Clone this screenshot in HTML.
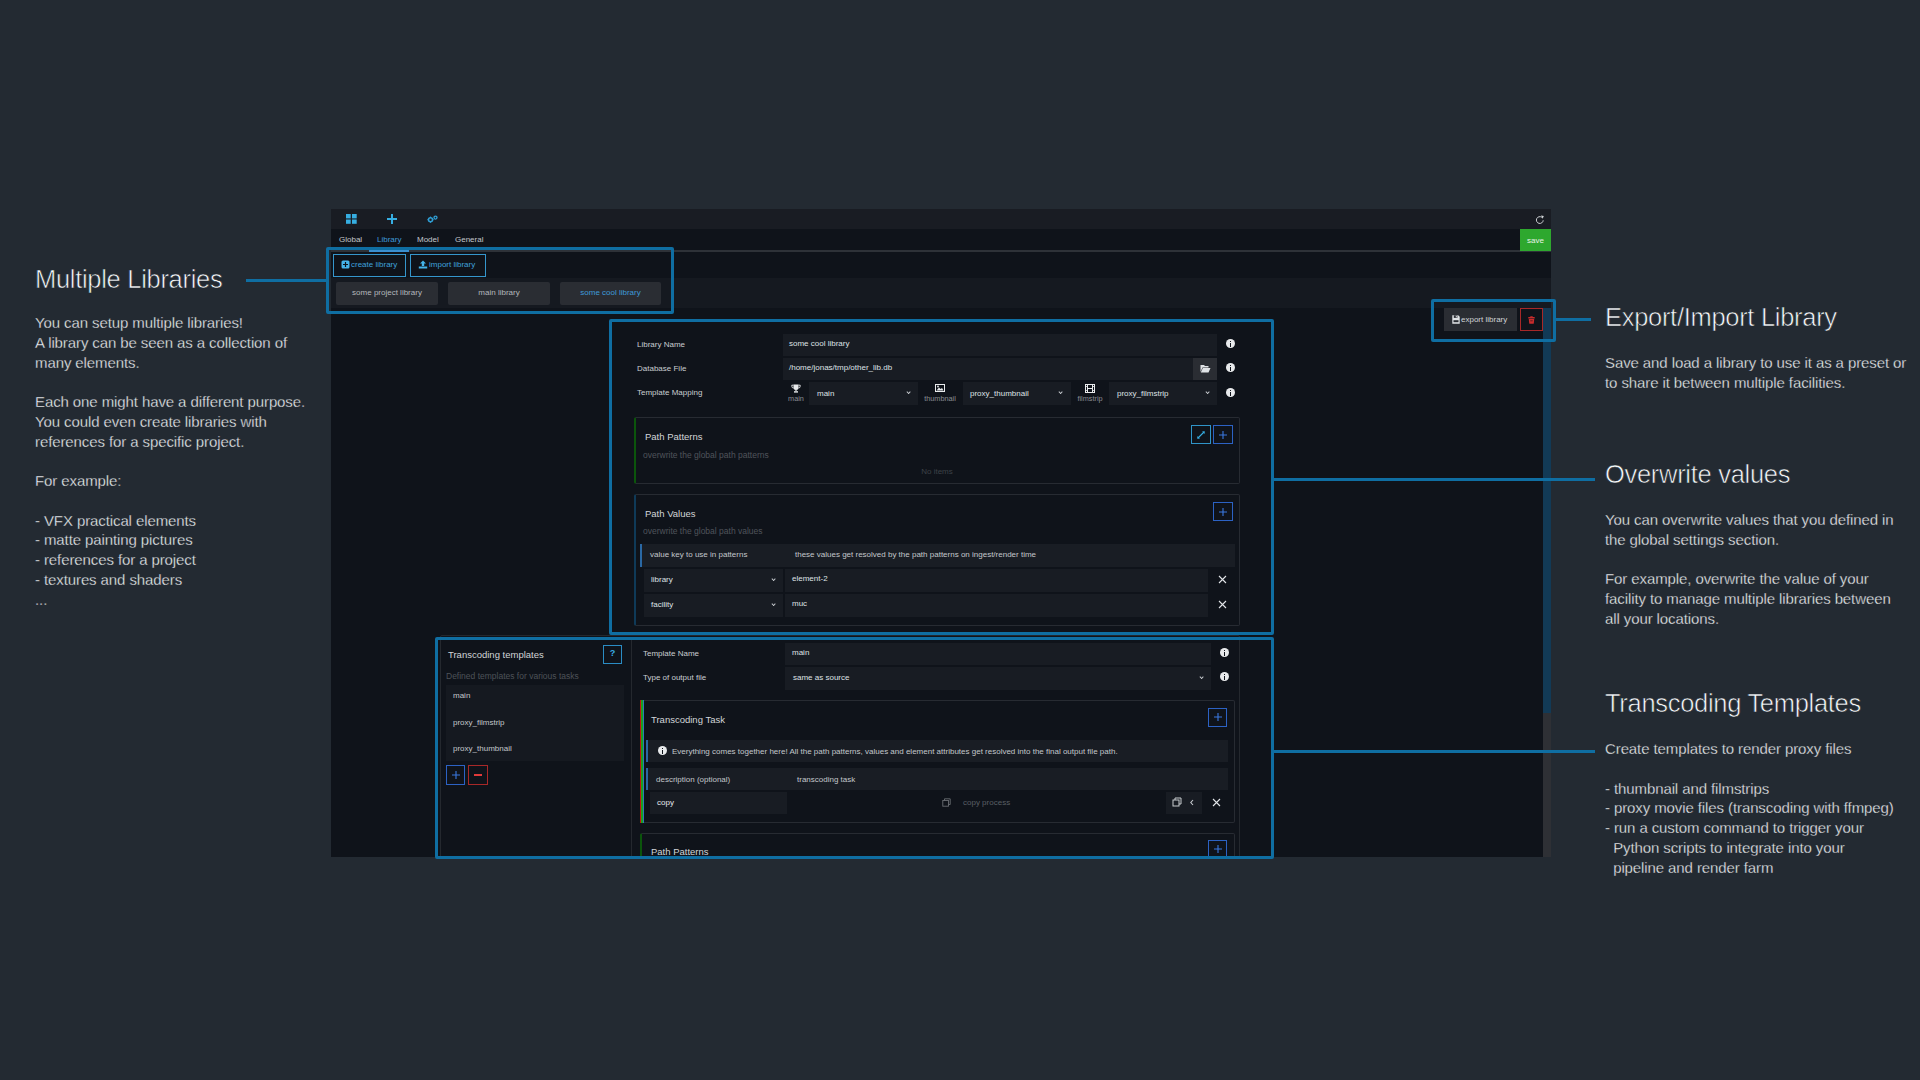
<!DOCTYPE html>
<html><head><meta charset="utf-8">
<style>
*{box-sizing:border-box;margin:0;padding:0}
html,body{width:1920px;height:1080px;overflow:hidden;background:#232a32;font-family:"Liberation Sans",sans-serif}
.a{position:absolute}
.t{position:absolute;white-space:pre;line-height:1}
.ann{color:#f2f4f6}
.h{font-size:25.5px;color:#f6f8fa;letter-spacing:-0.3px;-webkit-text-stroke:0.6px #232a32}
.p{font-size:15px;line-height:19.75px;color:#f2f4f6;letter-spacing:-0.1px;-webkit-text-stroke:0.3px #232a32}
.line{position:absolute;background:#0f6ea2;height:3px}
.box{position:absolute;border:3px solid #0f6ea2;border-radius:2px}
#app{position:absolute;left:331px;top:209px;width:1220px;height:648px;background:#0f131a;overflow:hidden}
.s{font-size:8px;color:#c9cdd1}
.g{color:#50555c}
.inp{position:absolute;background:#181c23}
.btnb{position:absolute;border:1px solid #2c62c4}
.info{position:absolute;width:9px;height:9px;border-radius:50%;background:#e8eaec}
.info:after{content:"";position:absolute;left:4px;top:3.5px;width:1.4px;height:4px;background:#0f131a}
.info:before{content:"";position:absolute;left:4px;top:1.5px;width:1.4px;height:1.3px;background:#0f131a}
.panel{position:absolute;border:1px solid #272b32;border-radius:2px}
.chev{position:absolute;width:3.2px;height:3.2px;border-right:1px solid #c9cdd1;border-bottom:1px solid #c9cdd1;transform:translate(1px,0.5px) rotate(45deg)}
.x{position:absolute;width:10px;height:10px}
.x:before,.x:after{content:"";position:absolute;left:4.4px;top:-1px;width:1.3px;height:12px;background:#e0e3e6;transform:rotate(45deg)}
.x:after{transform:rotate(-45deg)}
</style></head><body>

<!-- left annotation -->
<div class="t h" style="left:35px;top:267px">Multiple Libraries</div>
<div class="line" style="left:246px;top:279px;width:82px"></div>
<div class="t p ann" style="left:35px;top:313px">You can setup multiple libraries!
A library can be seen as a collection of
many elements.

Each one might have a different purpose.
You could even create libraries with
references for a specific project.

For example:

- VFX practical elements
- matte painting pictures
- references for a project
- textures and shaders
...</div>

<!-- right annotations -->
<div class="t h" style="left:1605px;top:305px">Export/Import Library</div>
<div class="t p ann" style="left:1605px;top:353px">Save and load a library to use it as a preset or
to share it between multiple facilities.</div>

<div class="t h" style="left:1605px;top:462px">Overwrite values</div>
<div class="t p ann" style="left:1605px;top:510px">You can overwrite values that you defined in
the global settings section.

For example, overwrite the value of your
facility to manage multiple libraries between
all your locations.</div>

<div class="t h" style="left:1605px;top:691px">Transcoding Templates</div>
<div class="t p ann" style="left:1605px;top:739px">Create templates to render proxy files

- thumbnail and filmstrips
- proxy movie files (transcoding with ffmpeg)
- run a custom command to trigger your
  Python scripts to integrate into your
  pipeline and render farm</div>

<!-- APP -->
<div id="app"><div class="a" style="left:-331px;top:-209px;width:1920px;height:1080px">
  <!-- top icon bar -->
  <div class="a" style="left:331px;top:209px;width:1220px;height:20px;background:#191c23"></div>
  <svg class="a" style="left:345px;top:213px" width="13" height="12" viewBox="0 0 13 12"><g fill="#36aee2"><rect x="1" y="1" width="4.7" height="4.4"/><rect x="7" y="1" width="4.7" height="4.4"/><rect x="1" y="6.5" width="4.7" height="4.3"/><rect x="7" y="6.5" width="4.7" height="4.3"/></g></svg>
  <svg class="a" style="left:386px;top:213px" width="12" height="12" viewBox="0 0 12 12"><g fill="#36aee2"><rect x="5" y="1" width="2" height="10"/><rect x="1" y="5" width="10" height="2"/></g></svg>
  <svg class="a" style="left:426px;top:214px" width="13" height="11" viewBox="0 0 13 11"><g fill="none" stroke="#2f9fd6"><circle cx="4.5" cy="5.7" r="2" stroke-width="1.5"/><circle cx="9.5" cy="3.6" r="1.5" stroke-width="1.3"/></g><g stroke="#2f9fd6" stroke-width="1"><path d="M4.5 2.6v1M4.5 7.8v1M1.4 5.7h1M6.6 5.7h1"/></g></svg>
  <svg class="a" style="left:1535px;top:215px" width="10" height="10" viewBox="0 0 10 10"><path d="M8.2 5.3A3.4 3.4 0 1 1 6.8 2.3" fill="none" stroke="#d4d7da" stroke-width="0.95"/><path d="M6 0.6L8.8 1L7.6 3.8z" fill="#d4d7da"/></svg>

  <!-- tab bar -->
  <div class="t s" style="left:339px;top:236px;color:#c3c7cb">Global</div>
  <div class="t s" style="left:377px;top:236px;color:#3f9ad8">Library</div>
  <div class="t s" style="left:417px;top:236px;color:#c3c7cb">Model</div>
  <div class="t s" style="left:455px;top:236px;color:#c3c7cb">General</div>
  <div class="a" style="left:331px;top:250px;width:1220px;height:2px;background:#2e3238"></div>
  <div class="a" style="left:369px;top:250px;width:40px;height:2px;background:#3a8fd0"></div>
  <div class="a" style="left:1520px;top:229px;width:31px;height:22px;background:#2ea82e"></div>
  <div class="t s" style="left:1527px;top:237px;color:#e8f2e8">save</div>

  <!-- create/import -->
  <div class="a" style="left:333px;top:254px;width:73px;height:23px;border:1px solid #3596cc"></div>
  <svg class="a" style="left:341px;top:260px" width="9" height="9" viewBox="0 0 9 9"><rect x="0.5" y="0.5" width="8" height="8" rx="1.5" fill="#45b4ea"/><path d="M4.5 2v5M2 4.5h5" stroke="#0f131a" stroke-width="1.2"/></svg>
  <div class="t s" style="left:351px;top:261px;color:#3fa2dc">create library</div>
  <div class="a" style="left:410px;top:254px;width:76px;height:23px;border:1px solid #3596cc"></div>
  <svg class="a" style="left:418px;top:260px" width="10" height="9" viewBox="0 0 10 9"><path d="M5 0.5L8 3.5H6.2V6H3.8V3.5H2z" fill="#45b4ea"/><rect x="0.8" y="6.5" width="8.4" height="2" fill="#45b4ea"/></svg>
  <div class="t s" style="left:429px;top:261px;color:#3fa2dc">import library</div>

  <!-- library tabs row -->
  <div class="a" style="left:331px;top:278px;width:1220px;height:30px;background:#151920"></div>
  <div class="a" style="left:336px;top:282px;width:102px;height:23px;background:#2a2d33;border-radius:2px"></div>
  <div class="a" style="left:448px;top:282px;width:102px;height:23px;background:#2a2d33;border-radius:2px"></div>
  <div class="a" style="left:560px;top:282px;width:101px;height:23px;background:#2a2d33;border-radius:2px"></div>
  <div class="t s" style="left:336px;width:102px;text-align:center;top:289px;color:#b4b8bc">some project library</div>
  <div class="t s" style="left:448px;width:102px;text-align:center;top:289px;color:#b4b8bc">main library</div>
  <div class="t s" style="left:560px;width:101px;text-align:center;top:289px;color:#3f9ad8">some cool library</div>

  <!-- scrollbar -->
  <div class="a" style="left:1543px;top:308px;width:8px;height:405px;background:#123a56"></div>
  <div class="a" style="left:1543px;top:713px;width:8px;height:144px;background:#2e3035"></div>

  <!-- export / delete -->
  <div class="a" style="left:1444px;top:308px;width:73px;height:23px;background:#2a2d33"></div>
  <svg class="a" style="left:1452px;top:315px" width="8" height="9" viewBox="0 0 8 9"><path d="M0.3 0.3H6.2L7.7 1.8V8.7H0.3z" fill="#dfe2e5"/><rect x="1.8" y="0.3" width="3.6" height="2.6" fill="#2a2d33"/><rect x="3.8" y="0.8" width="1" height="1.6" fill="#dfe2e5"/><rect x="1.5" y="5.2" width="5" height="2" fill="#2a2d33"/></svg>
  <div class="t s" style="left:1461px;top:316px;color:#d0d3d6">export library</div>
  <div class="a" style="left:1520px;top:308px;width:23px;height:23px;border:1px solid #a82828"></div>
  <svg class="a" style="left:1528px;top:316px" width="7" height="8" viewBox="0 0 7 8"><path d="M2.3 0.3h2.4v0.8h2v1.3H0.3V1.1h2z" fill="#c82c2c"/><path d="M0.8 2.9h5.4l-0.4 4.3q-0.1 0.6-0.7 0.6H1.9q-0.6 0-0.7-0.6z" fill="#c82c2c"/><path d="M2.3 4.8h2.4" stroke="#0f131a" stroke-width=".6"/></svg>

  <!-- library form -->
  <div class="t s" style="left:637px;top:341px">Library Name</div>
  <div class="t s" style="left:637px;top:365px">Database File</div>
  <div class="t s" style="left:637px;top:389px">Template Mapping</div>
  <div class="inp" style="left:783px;top:334px;width:434px;height:22px"></div>
  <div class="t s" style="left:789px;top:340px;color:#dfe2e5">some cool library</div>
  <div class="inp" style="left:783px;top:358px;width:434px;height:22px"></div>
  <div class="a" style="left:1193px;top:358px;width:24px;height:22px;background:#2a2d33"></div>
  <svg class="a" style="left:1200px;top:364px" width="11" height="9" viewBox="0 0 11 9"><path d="M0.5 1H4L5 2H8.5V3.5H2.5L0.5 8z" fill="#e0e3e6"/><path d="M2.8 4H10.5L8.5 8.5H0.8z" fill="#e0e3e6"/></svg>
  <div class="t s" style="left:789px;top:364px;color:#dfe2e5">/home/jonas/tmp/other_lib.db</div>
  <div class="info" style="left:1226px;top:339px"></div>
  <div class="info" style="left:1226px;top:363px"></div>
  <div class="info" style="left:1226px;top:388px"></div>

  <svg class="a" style="left:791px;top:384px" width="10" height="9" viewBox="0 0 10 9"><path d="M2.5 0.5H7.5V3.5A2.5 2.5 0 0 1 2.5 3.5z" fill="#e8eaec"/><path d="M2.5 1.2H0.8V2.2A1.8 1.8 0 0 0 2.6 4M7.5 1.2H9.2V2.2A1.8 1.8 0 0 1 7.4 4" fill="none" stroke="#e8eaec" stroke-width=".9"/><rect x="4.4" y="5.5" width="1.2" height="1.6" fill="#e8eaec"/><rect x="3" y="7.2" width="4" height="1.4" fill="#e8eaec"/></svg>
  <div class="t" style="left:779px;width:34px;text-align:center;top:395px;font-size:7.3px;color:#8a8e93">main</div>
  <div class="inp" style="left:809px;top:382px;width:109px;height:23px"></div>
  <div class="t s" style="left:817px;top:390px;color:#dfe2e5">main</div>
  <div class="chev" style="left:906px;top:390px"></div>
  <svg class="a" style="left:935px;top:384px" width="10" height="8" viewBox="0 0 10 8"><rect x="0.5" y="0.5" width="9" height="7" fill="none" stroke="#e8eaec"/><path d="M1.5 6.5L4 3.5L5.5 5L7 4L8.5 6.5z" fill="#e8eaec"/><circle cx="3" cy="2.5" r=".9" fill="#e8eaec"/></svg>
  <div class="t" style="left:920px;width:40px;text-align:center;top:395px;font-size:7.3px;color:#8a8e93">thumbnail</div>
  <div class="inp" style="left:963px;top:382px;width:108px;height:23px"></div>
  <div class="t s" style="left:970px;top:390px;color:#dfe2e5">proxy_thumbnail</div>
  <div class="chev" style="left:1058px;top:390px"></div>
  <svg class="a" style="left:1085px;top:384px" width="10" height="9" viewBox="0 0 10 9"><rect x="0.5" y="0.5" width="9" height="8" fill="none" stroke="#e8eaec"/><path d="M2.5 0.5V8.5M7.5 0.5V8.5M2.5 4.5H7.5" stroke="#e8eaec"/><path d="M0.5 2.5h2M0.5 6.5h2M7.5 2.5h2M7.5 6.5h2" stroke="#e8eaec" stroke-width=".8"/></svg>
  <div class="t" style="left:1070px;width:40px;text-align:center;top:395px;font-size:7.3px;color:#8a8e93">filmstrip</div>
  <div class="inp" style="left:1109px;top:382px;width:108px;height:23px"></div>
  <div class="t s" style="left:1117px;top:390px;color:#dfe2e5">proxy_filmstrip</div>
  <div class="chev" style="left:1205px;top:390px"></div>

  <!-- path patterns -->
  <div class="panel" style="left:634px;top:417px;width:606px;height:67px;border-left:2px solid #0b550b"></div>
  <div class="t" style="left:645px;top:432px;font-size:9.5px;color:#d2d5d8">Path Patterns</div>
  <div class="t" style="left:643px;top:451px;font-size:8.5px;color:#4f545a">overwrite the global path patterns</div>
  <div class="t" style="left:637px;width:600px;text-align:center;top:468px;font-size:8px;color:#3d4248">No items</div>
  <div class="a" style="left:1191px;top:425px;width:20px;height:19px;border:1px solid #2f94c8"></div>
  <svg class="a" style="left:1195px;top:429px" width="12" height="12" viewBox="0 0 12 12"><path d="M3 9L9 3" stroke="#36aee2" stroke-width="1.1"/><path d="M9.8 2.2L9.5 5L7 2.5z M2.2 9.8L2.5 7L5 9.5z" fill="#36aee2"/></svg>
  <div class="btnb" style="left:1213px;top:425px;width:20px;height:19px"></div>
  <svg class="a" style="left:1217px;top:429px" width="12" height="12" viewBox="0 0 12 12"><path d="M6 2v8M2 6h8" stroke="#3a78e0" stroke-width="1.1"/></svg>

  <!-- path values -->
  <div class="panel" style="left:634px;top:494px;width:606px;height:132px;border-left:2px solid #0f3a58"></div>
  <div class="t" style="left:645px;top:509px;font-size:9.5px;color:#d2d5d8">Path Values</div>
  <div class="t" style="left:643px;top:527px;font-size:8.5px;color:#4f545a">overwrite the global path values</div>
  <div class="btnb" style="left:1213px;top:502px;width:20px;height:19px"></div>
  <svg class="a" style="left:1217px;top:506px" width="12" height="12" viewBox="0 0 12 12"><path d="M6 2v8M2 6h8" stroke="#3a78e0" stroke-width="1.1"/></svg>
  <div class="a" style="left:640px;top:544px;width:595px;height:23px;background:#191d24;border-left:2px solid #2a68a4"></div>
  <div class="t" style="left:650px;top:551px;font-size:8px;color:#c3c7cb">value key to use in patterns</div>
  <div class="t" style="left:795px;top:551px;font-size:8px;color:#c3c7cb">these values get resolved by the path patterns on ingest/render time</div>
  <div class="inp" style="left:644px;top:569px;width:139px;height:23px"></div>
  <div class="t s" style="left:651px;top:576px;color:#dfe2e5">library</div>
  <div class="chev" style="left:771px;top:577px"></div>
  <div class="inp" style="left:785px;top:569px;width:423px;height:23px"></div>
  <div class="t s" style="left:792px;top:575px;color:#dfe2e5">element-2</div>
  <svg class="a" style="left:1218px;top:575px" width="9" height="9" viewBox="0 0 9 9"><path d="M1 1L8 8M8 1L1 8" stroke="#e2e5e8" stroke-width="1.1"/></svg>
  <div class="inp" style="left:644px;top:594px;width:139px;height:23px"></div>
  <div class="t s" style="left:651px;top:601px;color:#dfe2e5">facility</div>
  <div class="chev" style="left:771px;top:602px"></div>
  <div class="inp" style="left:785px;top:594px;width:423px;height:23px"></div>
  <div class="t s" style="left:792px;top:600px;color:#dfe2e5">muc</div>
  <svg class="a" style="left:1218px;top:600px" width="9" height="9" viewBox="0 0 9 9"><path d="M1 1L8 8M8 1L1 8" stroke="#e2e5e8" stroke-width="1.1"/></svg>

  <!-- transcoding section -->
  <div class="panel" style="left:440px;top:635px;width:800px;height:240px;border-color:#24282e"></div>
  <div class="a" style="left:631px;top:640px;width:1px;height:220px;background:#24282e"></div>
  <div class="t" style="left:448px;top:650px;font-size:9.5px;color:#d2d5d8">Transcoding templates</div>
  <div class="a" style="left:603px;top:645px;width:19px;height:19px;border:1px solid #2a8cc4"></div>
  <div class="t" style="left:603px;width:19px;text-align:center;top:649px;font-size:9px;font-weight:bold;color:#3aaee6">?</div>
  <div class="t" style="left:446px;top:672px;font-size:8.5px;color:#4d5258">Defined templates for various tasks</div>
  <div class="a" style="left:446px;top:685px;width:178px;height:76px;background:#151920"></div>
  <div class="t s" style="left:453px;top:692px;color:#c3c7cb">main</div>
  <div class="t s" style="left:453px;top:719px;color:#c3c7cb">proxy_filmstrip</div>
  <div class="t s" style="left:453px;top:745px;color:#c3c7cb">proxy_thumbnail</div>
  <div class="btnb" style="left:446px;top:765px;width:19px;height:20px"></div>
  <svg class="a" style="left:450px;top:769px" width="12" height="12" viewBox="0 0 12 12"><path d="M6 2v8M2 6h8" stroke="#3a78e0" stroke-width="1.1"/></svg>
  <div class="a" style="left:468px;top:765px;width:20px;height:20px;border:1px solid #a82828"></div>
  <div class="a" style="left:474px;top:774px;width:8px;height:1.5px;background:#e03a3a"></div>

  <div class="t s" style="left:643px;top:650px">Template Name</div>
  <div class="t s" style="left:643px;top:674px">Type of output file</div>
  <div class="inp" style="left:785px;top:643px;width:426px;height:22px"></div>
  <div class="t s" style="left:792px;top:649px;color:#dfe2e5">main</div>
  <div class="inp" style="left:785px;top:667px;width:426px;height:23px"></div>
  <div class="t s" style="left:793px;top:674px;color:#dfe2e5">same as source</div>
  <div class="chev" style="left:1199px;top:675px"></div>
  <div class="info" style="left:1220px;top:648px"></div>
  <div class="info" style="left:1220px;top:672px"></div>

  <div class="panel" style="left:640px;top:700px;width:595px;height:123px;border-left:none"></div>
  <div class="a" style="left:640px;top:700px;width:1px;height:123px;background:#c81010"></div>
  <div class="a" style="left:641px;top:700px;width:1.5px;height:123px;background:#1ea01e"></div>
  <div class="a" style="left:642.5px;top:700px;width:1.5px;height:123px;background:#2a7ab8"></div>
  <div class="t" style="left:651px;top:715px;font-size:9.5px;color:#d2d5d8">Transcoding Task</div>
  <div class="btnb" style="left:1208px;top:708px;width:19px;height:19px"></div>
  <svg class="a" style="left:1212px;top:711px" width="12" height="12" viewBox="0 0 12 12"><path d="M6 2v8M2 6h8" stroke="#3a78e0" stroke-width="1.1"/></svg>
  <div class="a" style="left:646px;top:740px;width:582px;height:22px;background:#191d24;border-left:2px solid #2a68a4"></div>
  <div class="info" style="left:658px;top:746px"></div>
  <div class="t" style="left:672px;top:748px;font-size:8px;color:#c3c7cb">Everything comes together here! All the path patterns, values and element attributes get resolved into the final output file path.</div>
  <div class="a" style="left:646px;top:768px;width:582px;height:22px;background:#191d24;border-left:2px solid #2a68a4"></div>
  <div class="t" style="left:656px;top:776px;font-size:8px;color:#c3c7cb">description (optional)</div>
  <div class="t" style="left:797px;top:776px;font-size:8px;color:#c3c7cb">transcoding task</div>
  <div class="inp" style="left:650px;top:792px;width:137px;height:22px"></div>
  <div class="t s" style="left:657px;top:799px;color:#e6e9ec">copy</div>
  <svg class="a" style="left:942px;top:798px" width="9" height="9" viewBox="0 0 9 9"><path d="M2.5 2.5V0.8H8.2V6.5H6.5" fill="none" stroke="#6a6e73" stroke-width=".9"/><rect x="0.8" y="2.5" width="5.7" height="5.7" fill="none" stroke="#6a6e73" stroke-width=".9"/></svg>
  <div class="t" style="left:963px;top:799px;font-size:8px;color:#5a5f65">copy process</div>
  <div class="inp" style="left:1166px;top:792px;width:36px;height:22px"></div>
  <svg class="a" style="left:1172px;top:797px" width="10" height="10" viewBox="0 0 10 10"><path d="M3 3V1H9V7H7" fill="none" stroke="#c8ccd0" stroke-width="1"/><rect x="1" y="3" width="6" height="6" fill="none" stroke="#c8ccd0" stroke-width="1"/></svg>
  <svg class="a" style="left:1189px;top:799px" width="6" height="7" viewBox="0 0 6 7"><path d="M4 1L1.8 3.5L4 6" fill="none" stroke="#c8ccd0" stroke-width="1.1"/></svg>
  <svg class="a" style="left:1212px;top:798px" width="9" height="9" viewBox="0 0 9 9"><path d="M1 1L8 8M8 1L1 8" stroke="#e2e5e8" stroke-width="1.1"/></svg>

  <div class="panel" style="left:640px;top:833px;width:595px;height:60px;border-left:2px solid #0b550b"></div>
  <div class="t" style="left:651px;top:847px;font-size:9.5px;color:#d2d5d8">Path Patterns</div>
  <div class="btnb" style="left:1208px;top:840px;width:19px;height:19px"></div>
  <svg class="a" style="left:1212px;top:843px" width="12" height="12" viewBox="0 0 12 12"><path d="M6 2v8M2 6h8" stroke="#3a78e0" stroke-width="1.1"/></svg>

</div></div>

<!-- annotation boxes -->
<div class="box" style="left:326px;top:247px;width:348px;height:67px"></div>
<div class="box" style="left:609px;top:319px;width:665px;height:316px"></div>
<div class="box" style="left:435px;top:637px;width:839px;height:222px"></div>
<div class="box" style="left:1431px;top:299px;width:125px;height:43px"></div>
<div class="line" style="left:1555px;top:318px;width:36px"></div>
<div class="line" style="left:1274px;top:478px;width:321px"></div>
<div class="line" style="left:1274px;top:750px;width:321px"></div>
</body></html>
